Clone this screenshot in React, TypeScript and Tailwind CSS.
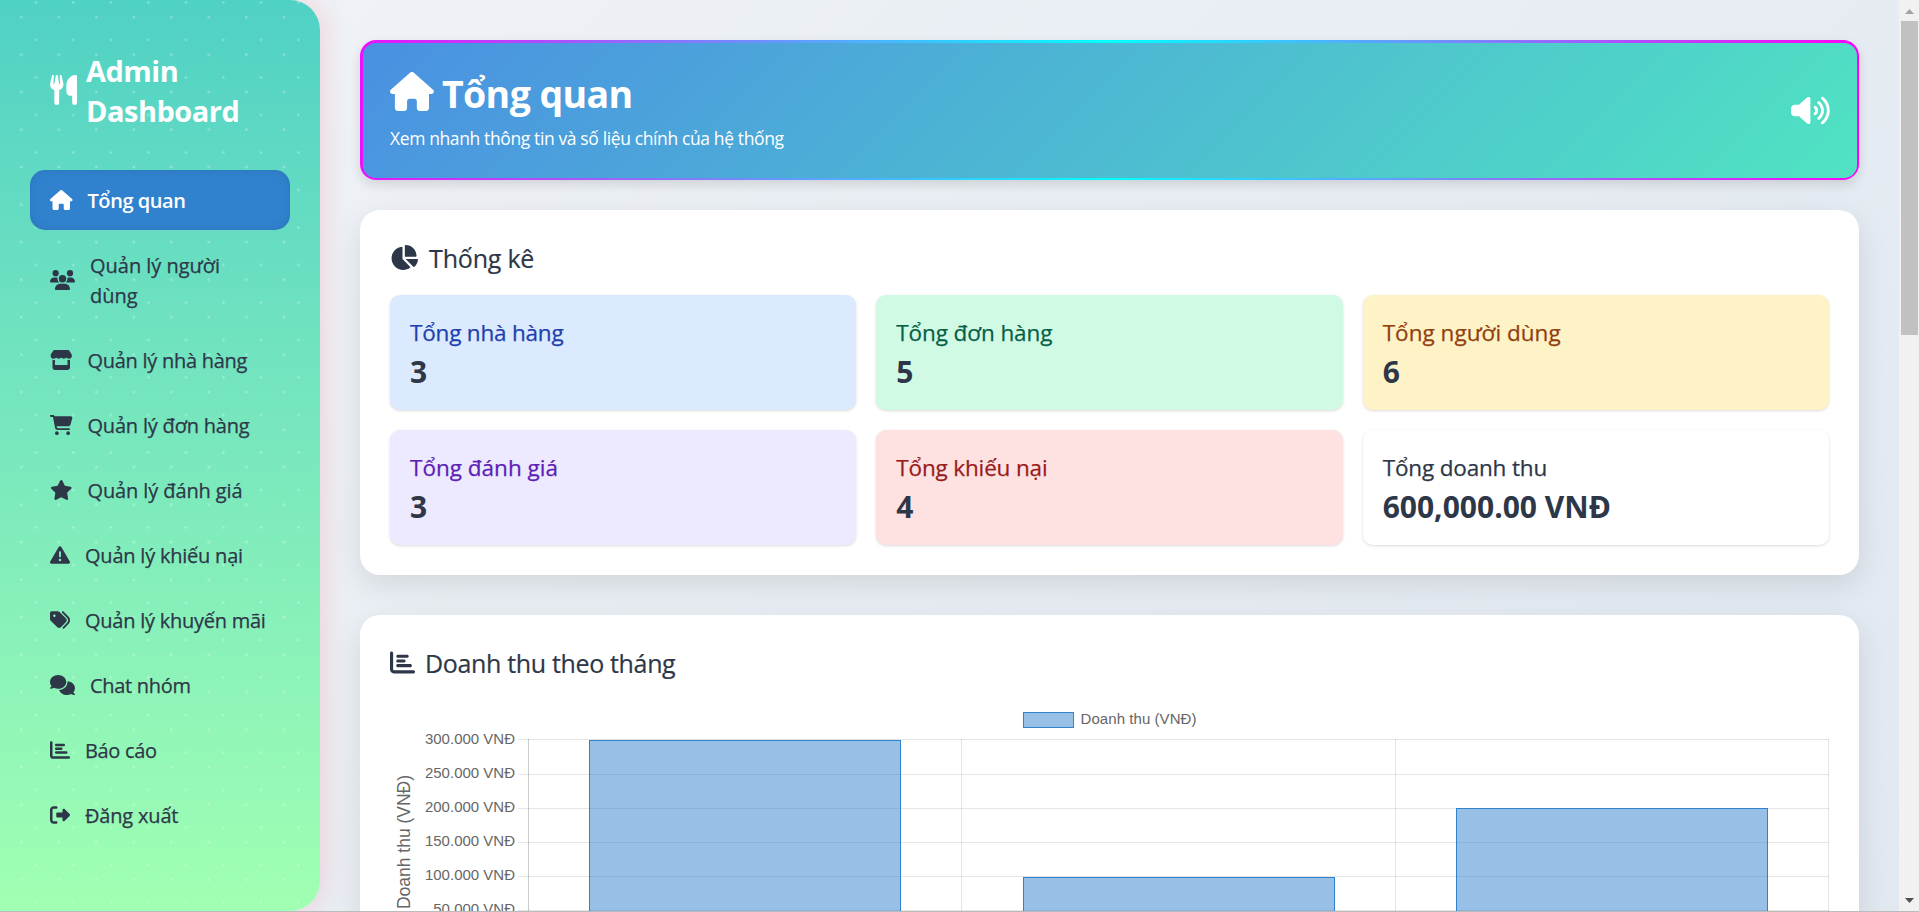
import type { IconType } from 'react-icons';
import {
  FaCartShopping,
  FaChartBar,
  FaChartPie,
  FaComments,
  FaHouse,
  FaRightFromBracket,
  FaStar,
  FaStore,
  FaTags,
  FaTriangleExclamation,
  FaUsers,
  FaVolumeHigh,
} from 'react-icons/fa6';

type NavItem = { label: string; icon: IconType; size: string; spacing: string; active?: boolean };

const NAV: NavItem[] = [
  { label: 'Tổng quan', icon: FaHouse, size: 'w-[22.5px]', spacing: 'tracking-[-0.44px]', active: true },
  { label: 'Quản lý người dùng', icon: FaUsers, size: 'w-[25px]', spacing: 'tracking-[-0.02px]' },
  { label: 'Quản lý nhà hàng', icon: FaStore, size: 'w-[22.5px]', spacing: 'tracking-[-0.28px]' },
  { label: 'Quản lý đơn hàng', icon: FaCartShopping, size: 'w-[22.5px]', spacing: 'tracking-[-0.2px]' },
  { label: 'Quản lý đánh giá', icon: FaStar, size: 'w-[22.5px]', spacing: 'tracking-[-0.11px]' },
  { label: 'Quản lý khiếu nại', icon: FaTriangleExclamation, size: 'w-[20px]', spacing: 'tracking-[-0.22px]' },
  { label: 'Quản lý khuyến mãi', icon: FaTags, size: 'w-[20px]', spacing: 'tracking-[-0.25px]' },
  { label: 'Chat nhóm', icon: FaComments, size: 'w-[25px]', spacing: 'tracking-[-0.3px]' },
  { label: 'Báo cáo', icon: FaChartBar, size: 'w-[20px]', spacing: 'tracking-[-0.33px]' },
  { label: 'Đăng xuất', icon: FaRightFromBracket, size: 'w-[20px]', spacing: 'tracking-[-0.18px]' },
];

const STATS = [
  { label: 'Tổng nhà hàng', value: '3', box: 'bg-[#dbeafe]', text: 'text-[#1e40af] tracking-[-0.2px]' },
  { label: 'Tổng đơn hàng', value: '5', box: 'bg-[#d1fae5]', text: 'text-[#065f46] tracking-[-0.1px]' },
  { label: 'Tổng người dùng', value: '6', box: 'bg-[#fef3c7]', text: 'text-[#92400e] tracking-[0.03px]' },
  { label: 'Tổng đánh giá', value: '3', box: 'bg-[#ede9fe]', text: 'text-[#5b21b6] tracking-[0px]' },
  { label: 'Tổng khiếu nại', value: '4', box: 'bg-[#fee2e2]', text: 'text-[#991b1b] tracking-[-0.16px]' },
  { label: 'Tổng doanh thu', value: '600,000.00 VNĐ', box: 'bg-white', text: 'text-[#2d3748] tracking-[-0.16px]' },
];

function UtensilsIcon() {
  return (
    <svg viewBox="0 0 448 512" fill="currentColor" className="h-[30px] w-[27px] shrink-0" preserveAspectRatio="none">
      <path d="M32 12A16 16 0 0 1 64 16L56 146a8 8 0 0 0 16 2L96 13a16 16 0 0 1 32 0L152 148a8 8 0 0 0 16 -2L160 16a16 16 0 0 1 32 -4L222 149C229 200 199 245 152 254V472a40 40 0 0 1 -80 0V254C25 245 -5 200 2 149Z" />
      <path d="M448 24V472a40 40 0 0 1 -80 0V352H336C300 352 272 320 272 288V176C272 80 350 0 420 0A24 24 0 0 1 448 24Z" />
    </svg>
  );
}

function Sidebar() {
  return (
    <aside className="relative z-10 flex h-[911px] w-80 shrink-0 flex-col rounded-r-[30px] bg-linear-to-b from-[#4fd1c5] to-[#a0ffb2] px-[30px] pt-[50px] shadow-[5px_0_25px_rgba(255,80,100,0.17)]">
      <svg className="absolute inset-0 h-full w-full rounded-r-[30px]" aria-hidden="true">
        <defs>
          <pattern id="dots" width="37.5" height="37.5" patternUnits="userSpaceOnUse">
            <circle cx="21.3" cy="17.2" r="1.3" fill="#fff" fillOpacity="0.3" />
            <circle cx="35.9" cy="2.5" r="1.3" fill="#fff" fillOpacity="0.3" />
          </pattern>
        </defs>
        <rect width="100%" height="100%" fill="url(#dots)" />
      </svg>
      <div className="relative flex items-center gap-[9px] px-5 text-white">
        <UtensilsIcon />
        <h2 className="mt-px -mb-px text-[29px] leading-10 font-bold tracking-[-0.5px]">Admin Dashboard</h2>
      </div>
      <nav className="relative mt-10 flex flex-col gap-[5px]">
        {NAV.map(({ label, icon: Icon, size, spacing, active }) => (
          <a
            key={label}
            className={`flex items-center gap-[15px] rounded-[15px] py-[15px] pr-5 pl-5 text-[20px] leading-[30px] ${spacing} ${
              active
                ? 'bg-[#3182ce] font-semibold text-white shadow-[inset_0_0_10px_rgba(0,0,0,0.1)]'
                : 'font-medium text-[#2d3748] [-webkit-text-stroke:0.25px_#2d3748]'
            }`}
          >
            <Icon className={`-mt-px h-5 shrink-0 ${size}`} />
            <span className="mt-px -mb-px">{label}</span>
          </a>
        ))}
      </nav>
    </aside>
  );
}

function PageHeader() {
  return (
    <header className="h-[140px] shrink-0 rounded-2xl bg-[linear-gradient(90deg,#ea12ff_0%,#00ffff_50%,#ff00ff_100%)] pt-[3px] pr-[2px] pb-[2px] pl-[3px] shadow-[0_5px_12px_rgba(0,0,0,0.12)]">
      <div className="flex h-full items-center justify-between rounded-[13px] bg-[linear-gradient(135deg,#4a90e2,#50e3c2)] pr-[27px] pl-[27px] text-white">
        <div>
          <div className="flex items-center gap-2">
            <FaHouse className="-mt-1.5 h-[39px] w-[43.9px]" />
            <h1 className="-mt-px mb-px text-[37.5px] leading-[50px] font-bold tracking-[-0.6px]">Tổng quan</h1>
          </div>
          <p className="mt-[5px] text-[17.5px] leading-[27px] tracking-[-0.38px]">
            Xem nhanh thông tin và số liệu chính của hệ thống
          </p>
        </div>
        <FaVolumeHigh className="h-[31px] w-[38.75px]" />
      </div>
    </header>
  );
}

function StatsCard() {
  return (
    <section className="mt-[30px] h-[365px] shrink-0 rounded-[20px] bg-white p-[30px] shadow-[0_10px_30px_rgba(0,0,0,0.1)]">
      <h3 className="flex items-center gap-[11px] text-[25px] leading-9 font-medium tracking-[-0.2px] [-webkit-text-stroke:0.2px_#2d3748]">
        <FaChartPie className="-mt-0.5 h-[25px] w-[28.1px]" />
        Thống kê
      </h3>
      <div className="mt-[19px] grid grid-cols-3 gap-5">
        {STATS.map((s) => (
          <div
            key={s.label}
            className={`h-[115px] rounded-[10px] px-5 pt-[21px] shadow-[0_1px_3px_rgba(0,0,0,0.15)] ${s.box}`}
          >
            <h4 className={`text-[22.5px] leading-[34px] font-medium [-webkit-text-stroke:0.25px_currentColor] ${s.text}`}>
              {s.label}
            </h4>
            <p className="mt-0.5 text-[30px] leading-10 font-bold">{s.value}</p>
          </div>
        ))}
      </div>
    </section>
  );
}

const TICKS = [
  { y: 39, label: '300.000 VNĐ' },
  { y: 74, label: '250.000 VNĐ' },
  { y: 108, label: '200.000 VNĐ' },
  { y: 142, label: '150.000 VNĐ' },
  { y: 176, label: '100.000 VNĐ' },
  { y: 210, label: '50.000 VNĐ' },
];
const COLUMNS = [138, 571, 1005, 1438];
const BARS = [
  { x: 199, y: 40, w: 312 },
  { x: 633, y: 177, w: 312 },
  { x: 1066, y: 108, w: 312 },
];

function RevenueChart() {
  return (
    <svg width="1439" height="211" className="mt-[19px] block font-['Liberation_Sans',sans-serif]">
      <rect x="633.5" y="12.5" width="50" height="15" fill="#3182ce" fillOpacity="0.5" stroke="#3182ce" />
      <text x="690.5" y="24" fontSize="15" textLength="116" fill="#666">
        Doanh thu (VNĐ)
      </text>
      {TICKS.map((t) => (
        <g key={t.y}>
          <rect x="128" y={t.y} width="1311" height="1" fill="#000" fillOpacity="0.1" />
          <text x="125" y={t.y + (t.y === 39 ? 5 : 4)} fontSize="15" textAnchor="end" fill="#666">
            {t.label}
          </text>
        </g>
      ))}
      {COLUMNS.map((x, i) => (
        <rect key={x} x={x} y="39" width="1" height="172" fill="#000" fillOpacity={i === 0 ? 0.2 : 0.1} />
      ))}
      {BARS.map((b) => (
        <g key={b.x}>
          <rect x={b.x} y={b.y} width={b.w} height="260" fill="#3182ce" fillOpacity="0.5" />
          <rect x={b.x + 0.5} y={b.y + 0.5} width={b.w - 1} height="260" fill="none" stroke="#3182ce" />
        </g>
      ))}
      <text transform="translate(20 209) rotate(-90)" fontSize="17.5" textLength="134" fill="#666">
        Doanh thu (VNĐ)
      </text>
    </svg>
  );
}

function RevenueCard() {
  return (
    <section className="mt-10 h-[400px] shrink-0 rounded-[20px] bg-white p-[30px] shadow-[0_10px_30px_rgba(0,0,0,0.1)]">
      <h3 className="flex items-center gap-[10px] text-[25px] leading-9 font-medium tracking-[-0.34px] [-webkit-text-stroke:0.2px_#2d3748]">
        <FaChartBar className="-mt-px h-[25px] w-[25px]" />
        Doanh thu theo tháng
      </h3>
      <RevenueChart />
    </section>
  );
}

function Scrollbar() {
  return (
    <div className="flex h-full w-5 shrink-0 flex-col items-center bg-[#f1f1f1] pt-[9px] pb-[8px]">
      <svg width="9" height="5" className="block shrink-0">
        <path d="M0 5L4.5 0L9 5Z" fill="#a3a3a3" />
      </svg>
      <div className="mt-[7px] ml-px h-[314px] w-[17px] shrink-0 bg-[#c1c1c1]" />
      <svg width="9" height="5" className="mt-auto block shrink-0">
        <path d="M0 0L4.5 5L9 0Z" fill="#505050" />
      </svg>
    </div>
  );
}

export default function App() {
  return (
    <div className="flex h-[912px] w-[1919px] flex-col overflow-hidden border-b border-[#bbb] font-['Open_Sans','Noto_Sans',sans-serif] text-[#2d3748]">
      <div className="flex h-[911px] overflow-hidden bg-[linear-gradient(135deg,#f0f3f7,#e1e8f0)]">
        <Sidebar />
        <main className="flex h-[911px] min-w-0 flex-1 flex-col overflow-hidden px-10 pt-10">
          <PageHeader />
          <StatsCard />
          <RevenueCard />
        </main>
        <Scrollbar />
      </div>
    </div>
  );
}
